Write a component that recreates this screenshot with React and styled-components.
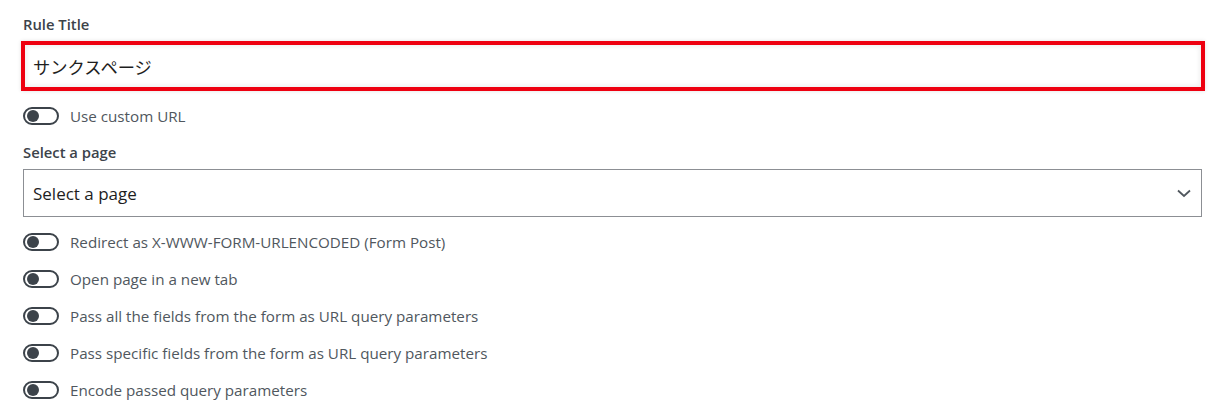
import React from 'react';
import styled, { createGlobalStyle } from 'styled-components';

const GlobalStyle = createGlobalStyle`
	body {
		margin: 0;
		background: #ffffff;
		font-family: 'Segoe UI', 'Open Sans', 'Noto Sans CJK JP', sans-serif;
	}
`;

const Panel = styled.div`
	display: flex;
	flex-flow: column;
	padding: 14px 20px 0 23px;
`;

const Label = styled.div`
	font-size: 14.8px;
	font-weight: 600;
	line-height: 20px;
	color: #3c434a;
	margin-bottom: ${props => props.gap}px;
`;

const TitleField = styled.div`
	height: 50px;
	box-sizing: border-box;
	margin: 0 -3px 0 -2px;
	border: 4px solid #ee0010;
	box-shadow: 0 0 4px rgba(0, 0, 0, 0.12), inset 0 0 4px 2px rgba(0, 0, 0, 0.06);
	display: flex;
	align-items: center;
	padding: 0 8px;
	font-family: 'Noto Sans CJK JP', sans-serif;
	font-size: 17.3px;
	color: #1e1e1e;
`;

const SelectBox = styled.div`
	height: 48px;
	box-sizing: border-box;
	border: 1px solid #8c8f94;
	display: flex;
	align-items: center;
	justify-content: space-between;
	padding: 0 9px 0 9px;
	font-size: 17px;
	color: #1e1e1e;
	margin-bottom: 15px;
`;

const ToggleList = styled.div`
	display: flex;
	flex-flow: column;
	gap: 17px;
`;

const Row = styled.div`
	display: flex;
	align-items: center;
	height: 20px;
	margin-top: ${props => props.top || 0}px;
	margin-bottom: ${props => props.bottom || 0}px;
`;

const Track = styled.span`
	position: relative;
	width: 36px;
	height: 18px;
	box-sizing: border-box;
	border: 2px solid #3c434a;
	border-radius: 9px;
	margin-right: 11px;
	flex-shrink: 0;
`;

const Knob = styled.span`
	position: absolute;
	left: 2px;
	top: 1px;
	width: 12px;
	height: 12px;
	border-radius: 50%;
	background: #3c434a;
`;

const OptionText = styled.span`
	font-size: 15.2px;
	color: #50575e;
`;

const Toggle = ({ children, top, bottom }) => (
	<Row top={top} bottom={bottom}>
		<Track>
			<Knob />
		</Track>
		<OptionText>{children}</OptionText>
	</Row>
);

const Chevron = () => (
	<svg width="16" height="10" viewBox="0 0 16 10">
		<polyline points="2,2.5 8,8 14,2.5" fill="none" stroke="#50575e" strokeWidth="1.8" />
	</svg>
);

export default function App() {
	return (
		<Panel>
			<GlobalStyle />
			<Label gap={7}>Rule Title</Label>
			<TitleField>サンクスページ</TitleField>
			<Toggle top={15} bottom={16}>Use custom URL</Toggle>
			<Label gap={7}>Select a page</Label>
			<SelectBox>
				<span>Select a page</span>
				<Chevron />
			</SelectBox>
			<ToggleList>
				<Toggle>Redirect as X-WWW-FORM-URLENCODED (Form Post)</Toggle>
				<Toggle>Open page in a new tab</Toggle>
				<Toggle>Pass all the fields from the form as URL query parameters</Toggle>
				<Toggle>Pass specific fields from the form as URL query parameters</Toggle>
				<Toggle>Encode passed query parameters</Toggle>
			</ToggleList>
		</Panel>
	);
}
